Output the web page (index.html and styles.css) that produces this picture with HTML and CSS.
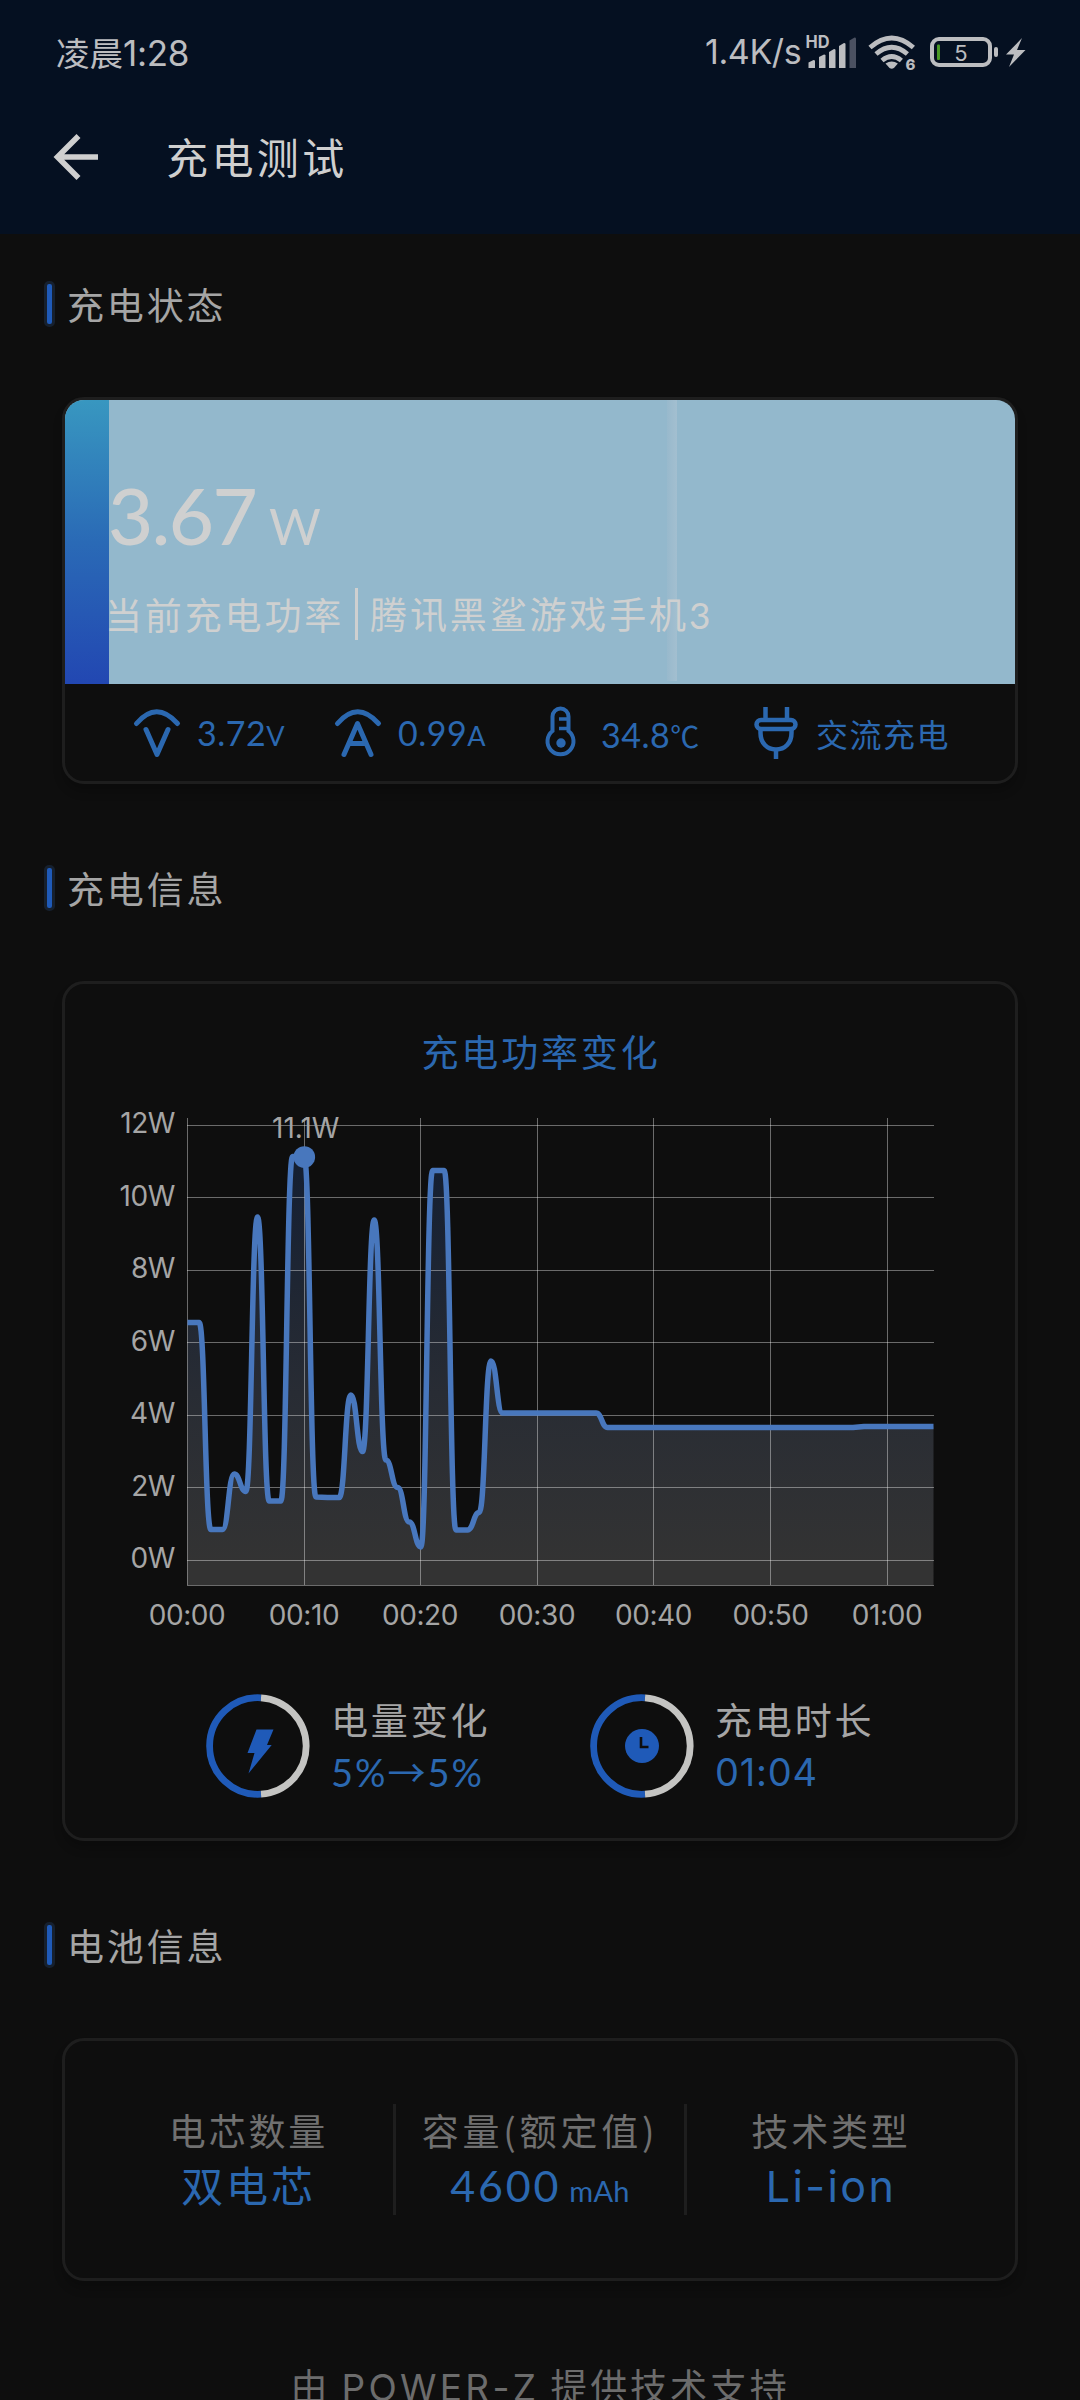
FILE: index.html
```html
<!DOCTYPE html>
<html lang="zh-CN">
<head>
<meta charset="utf-8">
<title>充电测试</title>
<link rel="stylesheet" href="styles.css">
</head>
<body>
<header class="header">
  <div class="statusbar">
    <div class="clock">凌晨<span class="clock-num">1:28</span></div>
    <div class="net">1.4K/s</div>
    <svg class="status-icons" width="222" height="40" viewBox="806 32 222 40">
      <g fill="#bcbdc0">
        <text x="805.5" y="48.3" font-size="17" font-weight="700" textLength="24" lengthAdjust="spacingAndGlyphs">HD</text>
        <path d="M808.500 62.500l5-2.500q1.500 0 1.500 1v7h-6.500z"/>
        <path d="M819 57l5-2.500q1.500 0 1.500 1v12.500h-6.500z"/>
        <path d="M829 52l5-3q1.500 0 1.500 1v18h-6.500z"/>
        <path d="M839 46l5-3q1.500 0 1.500 1v24h-6.500z"/>
        <path d="M849.500 40.500l5-3q1.500 0 1.500 1v29.500h-6.500z" fill="#4b5161"/>
        <path d="M885.500 63.500q6.200-4 12.400 0l-4 4.500q-2.200 1.600-4.400 0z"/>
        <text x="905.500" y="70" font-size="15" font-weight="800">6</text>
        <rect x="994" y="47" width="4" height="10" rx="2"/>
        <path d="M1022 38l-16 16.500h8l-5 12.500 16.500-17h-8.500z"/>
      </g>
      <g fill="none" stroke="#bcbdc0">
        <path stroke-width="4.800" d="M870 47.500q21.700-19 43.400 0M876 54q15.700-13.500 31.400 0M882 60.500q9.700-8 19.400 0"/>
        <rect x="932" y="39" width="58" height="26" rx="7" stroke-width="4"/>
      </g>
      <rect x="937" y="44.500" width="3" height="15.500" rx="1" fill="#4a9a26"/>
      <text x="961" y="60.500" font-size="22" fill="#bcbdc0" text-anchor="middle">5</text>
    </svg>
  </div>
  <div class="appbar">
    <svg class="back" width="46" height="46" viewBox="0 0 46 46"><path d="M24.500 2L3.500 23l21 21M4 23h40" fill="none" stroke="#cfcfcf" stroke-width="5.600"/></svg>
    <h1>充电测试</h1>
  </div>
</header>

<main>
  <h2>充电状态</h2>
  <section class="card status-card">
    <div class="hero">
      <div class="power"><span class="power-num">3.67</span><span class="power-unit">W</span></div>
      <div class="device"><span>当前充电功率</span><i class="sep"></i><span>腾讯黑鲨游戏手机<span class="lat">3</span></span></div>
    </div>
    <div class="metrics">
      <div class="metric volt">
        <svg width="46" height="52" viewBox="0 0 46 52"><path d="M2.500 16.500q20-23.500 41 0M12 22.500l11 25 11-25" fill="none" stroke="#2b68b0" stroke-width="5" stroke-linecap="round" stroke-linejoin="round"/></svg>
        <span>3.72<small>V</small></span>
      </div>
      <div class="metric amp">
        <svg width="46" height="52" viewBox="0 0 46 52"><path d="M2.500 16.500q20-23.500 41 0M9 47.500l13.500-31 13.500 31M14.500 36.500h16" fill="none" stroke="#2b68b0" stroke-width="5" stroke-linecap="round" stroke-linejoin="round"/></svg>
        <span>0.99<small>A</small></span>
      </div>
      <div class="metric temp">
        <svg width="32" height="54" viewBox="0 0 32 54"><path d="M7.500 25V10.500a8 8 0 0 1 16 0V25a13 13 0 1 1-16 0z" fill="none" stroke="#2b68b0" stroke-width="4"/><path d="M14 13h10M14 22.500h10" stroke="#2b68b0" stroke-width="3.500"/><circle cx="16" cy="37" r="4.700" fill="#2b68b0"/></svg>
        <span>34.8<small class="cjk">℃</small></span>
      </div>
      <div class="metric plug">
        <svg width="44" height="54" viewBox="0 0 44 54"><g fill="none" stroke="#2b68b0" stroke-width="4.500"><path d="M11.500 1v12M33 1v12M22 43v10M6.500 23v4c0 10 6.500 16.500 15.500 16.500S37.500 37 37.500 27v-4"/><rect x="2.500" y="14" width="39" height="9" rx="4.500"/></g></svg>
        <span class="cn">交流充电</span>
      </div>
    </div>
  </section>

  <h2>充电信息</h2>
  <section class="card chart-card">
    <h3>充电功率变化</h3>
    <svg class="chart" width="950" height="550" viewBox="65 1090 950 550">
      <defs>
        <linearGradient id="area" gradientUnits="userSpaceOnUse" x1="0" y1="1157" x2="0" y2="1585">
          <stop offset="0" stop-color="#141f32"/><stop offset=".55" stop-color="#282c34"/><stop offset=".95" stop-color="#333"/><stop offset="1" stop-color="#333"/>
        </linearGradient>
      </defs>
      <path fill="url(#area)" d="M187.500 1322.500h11.670c5.830 0 5.830 207 11.670 207h11.670c5.830 0 5.830-55.500 11.670-55.500s5.830 17.500 11.670 17.500 5.830-274.500 11.670-274.500 5.830 284 11.670 284h11.670c5.830 0 5.830-344.500 11.670-344.500h11.670c5.830 0 5.830 340.500 11.670 340.500l11.670.5h11.670c5.830 0 5.830-102.500 11.670-102.500s5.830 56.500 11.670 56.500 5.830-231.500 11.670-231.500 5.830 240 11.670 240 5.830 27.500 11.670 27.500 5.830 34.500 11.670 34.500 5.830 25 11.670 25 5.830-376.500 11.670-376.500h11.670c5.830 0 5.830 359.500 11.670 359.500h11.670c5.830 0 5.830-17.500 11.670-17.500s5.830-151.500 11.670-151.500 5.830 52 11.670 52H596c5.800 0 5.800 14.500 11.600 14.500H853l11-1h69.500V1585h-746z"/>
      <g stroke="#fff" stroke-opacity=".39" stroke-width="1">
        <path d="M187 1125.500h747M187 1197.500h747M187 1270.500h747M187 1342.500h747M187 1415.500h747M187 1487.500h747M187 1560.500h747M187 1585.500h747"/>
        <path d="M187.500 1118v467M304.500 1118v467M420.500 1118v467M537.500 1118v467M653.500 1118v467M770.500 1118v467M887.500 1118v467"/>
      </g>
      <path fill="none" stroke="#4877bd" stroke-width="5.500" stroke-linejoin="round" d="M187.500 1322.500h11.670c5.830 0 5.830 207 11.670 207h11.670c5.830 0 5.830-55.500 11.670-55.500s5.830 17.500 11.670 17.500 5.830-274.500 11.670-274.500 5.830 284 11.670 284h11.670c5.830 0 5.830-344.500 11.670-344.500h11.670c5.830 0 5.830 340.500 11.670 340.500l11.670.5h11.670c5.830 0 5.830-102.500 11.670-102.500s5.830 56.500 11.670 56.500 5.830-231.500 11.670-231.500 5.830 240 11.670 240 5.830 27.500 11.670 27.500 5.830 34.500 11.670 34.500 5.830 25 11.670 25 5.830-376.500 11.670-376.500h11.670c5.830 0 5.830 359.500 11.670 359.500h11.670c5.830 0 5.830-17.500 11.670-17.500s5.830-151.500 11.670-151.500 5.830 52 11.670 52H596c5.800 0 5.800 14.500 11.600 14.500H853l11-1h69.500"/>
      <circle cx="304.300" cy="1157" r="10.800" fill="#4877bd"/>
      <g class="axis" text-anchor="end">
        <text x="175" y="1133">12W</text><text x="175" y="1206">10W</text><text x="175" y="1278">8W</text><text x="175" y="1351">6W</text><text x="175" y="1423">4W</text><text x="175" y="1496">2W</text><text x="175" y="1568">0W</text>
      </g>
      <g class="axis" text-anchor="middle">
        <text x="305.500" y="1138" textLength="67">11.1W</text>
        <text x="187" y="1625">00:00</text><text x="304" y="1625">00:10</text><text x="420" y="1625">00:20</text><text x="537" y="1625">00:30</text><text x="653.500" y="1625">00:40</text><text x="770.500" y="1625">00:50</text><text x="887" y="1625">01:00</text>
      </g>
    </svg>
    <div class="stats">
      <div class="stat">
        <svg width="104" height="104" viewBox="0 0 104 104"><g fill="none" stroke-width="6.800"><path stroke="#1f5ab8" d="M55 3.800A48.300 48.300 0 1 0 55 100.200"/><path stroke="#c4c4c2" d="M55 3.800A48.300 48.300 0 0 1 55 100.200"/></g><path fill="#1f5ab8" d="M50.500 35.500h17l-6.500 15.500h4.700L42.500 79.500l6-20.500h-7z"/></svg>
        <div class="stat-text"><span>电量变化</span><b>5%<i class="arrow">→</i>5%</b></div>
      </div>
      <div class="stat">
        <svg width="104" height="104" viewBox="0 0 104 104"><g fill="none" stroke-width="6.800"><path stroke="#1f5ab8" d="M55 3.800A48.300 48.300 0 1 0 55 100.200"/><path stroke="#c4c4c2" d="M55 3.800A48.300 48.300 0 0 1 55 100.200"/></g><circle cx="52" cy="52" r="17" fill="#1f5ab8"/><path d="M51 43v10h7.500" fill="none" stroke="#0e0e0e" stroke-width="2.600"/></svg>
        <div class="stat-text"><span>充电时长</span><b class="duration">01:04</b></div>
      </div>
    </div>
  </section>

  <h2>电池信息</h2>
  <section class="card battery-card">
    <div class="cell"><span>电芯数量</span><b>双电芯</b></div>
    <div class="cell rated"><span>容量(额定值)</span><b class="lat">4600<small>mAh</small></b></div>
    <div class="cell"><span>技术类型</span><b class="tech">Li-ion</b></div>
  </section>
  <footer>由 <span class="brand">POWER-Z</span> 提供技术支持</footer>
</main>
</body>
</html>
```
FILE: styles.css
```css
*, *::before { box-sizing: border-box; margin: 0; padding: 0; }
html, body { width: 1080px; height: 2400px; overflow: hidden; }
body {
  background: #0e0e0e;
  color: #a5a5a5;
  font-family: "Noto Sans CJK SC", sans-serif;
  font-size: 37px;
  letter-spacing: 2.85px;
  white-space: nowrap;
}
svg { display: block; flex: none; overflow: visible; font-family: Inter, sans-serif; letter-spacing: 0; }
i, b { font-style: normal; font-weight: 400; }
.lat { font-family: Lato, "Noto Sans CJK SC", sans-serif; }

.header { height: 234px; background: #051021; }
.statusbar { display: flex; align-items: center; height: 104px; padding: 0 52px 0 56px; color: #bcbdc0; letter-spacing: 0; }
.clock { flex: 1; font-size: 33.5px; line-height: 40px; }
.clock-num { font-family: Inter, sans-serif; font-size: 35px; letter-spacing: -.3px; }
.net { width: 101px; font-family: Inter, sans-serif; font-size: 34px; line-height: 40px; letter-spacing: -.4px; }
.appbar { display: flex; align-items: center; height: 106px; padding-left: 54px; gap: 66px; }
h1 { font-size: 42px; font-weight: 400; line-height: 60px; letter-spacing: 3.4px; color: #cfcfcf; margin-top: -3px; }

h2 {
  display: flex;
  align-items: center;
  height: 46px;
  margin: 81px 0 70px 44px;
  font-size: 37px;
  font-weight: 400;
  line-height: 46px;
}
h2::before {
  content: "";
  width: 11px;
  height: 46px;
  margin-right: 12px;
  border: 3px solid #16202e;
  border-radius: 5px;
  background: #1f5ab8;
}
main > h2:first-child { margin-top: 47px; }

.card {
  width: 956px;
  margin-left: 62px;
  border: 3px solid #1e1e1e;
  border-radius: 22px;
  overflow: hidden;
  box-shadow: 0 8px 10px rgba(0, 0, 0, .2);
}

.status-card { height: 387px; }
.hero {
  height: 284px;
  padding: 75px 0 0 44px;
  color: #cfd0d0;
  background:
    linear-gradient(90deg, #98b9cc, #a3bfd0) 602px 0 / 10px 281px no-repeat,
    linear-gradient(#3897c0, #2a6ab6 50%, #2247b2) 0 0 / 44px 100% no-repeat,
    #93b8cc;
}
.power { display: flex; align-items: baseline; height: 80px; line-height: 80px; font-family: Lato, sans-serif; }
.power-num { width: 161px; margin-left: -1px; font-size: 78px; font-weight: 500; letter-spacing: -1.5px; }
.power-unit { font-size: 50px; font-weight: 400; }
.device { display: flex; align-items: center; height: 52px; margin-top: 33px; margin-left: -4px; line-height: 52px; }
.sep { width: 3px; height: 52px; margin: 0 12px 0 11px; background: #cfd0d0; }
.metrics { display: flex; align-items: center; height: 97px; padding-left: 69px; color: #2b68b0; }
.metric { display: flex; align-items: center; height: 60px; font-family: Lato, sans-serif; font-size: 34px; line-height: 60px; letter-spacing: .5px; }
.metric span { padding-top: 4px; }
.metric small { font-size: 27px; }
.metric .cjk { font-family: "Noto Sans CJK SC", sans-serif; font-size: 29px; }
.metric .cn { padding-top: 0; font-family: "Noto Sans CJK SC", sans-serif; font-size: 32px; letter-spacing: 1.5px; }
.volt, .amp { width: 201px; gap: 17px; }
.temp { width: 209px; gap: 24px; margin-left: 9px; }
.plug { gap: 18px; }

.chart-card { height: 860px; padding-top: 40px; }
h3 { height: 54px; padding-left: 2px; font-size: 37px; font-weight: 400; line-height: 54px; text-align: center; color: #2b68b0; }
.chart { margin-top: 12px; }
.axis { font-size: 28px; fill: #a5a5a5; letter-spacing: -.4px; }
.stats { display: flex; padding: 54px 0 0 141px; }
.stat { display: flex; width: 384px; gap: 21px; }
.stat-text { display: flex; flex-direction: column; }
.stat-text span { line-height: 50px; }
.stat-text b { font-family: Lato, sans-serif; font-size: 38px; line-height: 54px; letter-spacing: 2px; color: #2b68b0; }
.stat-text .arrow { font-family: "Noto Sans CJK SC", sans-serif; }
.stat-text .duration { font-family: Inter, sans-serif; letter-spacing: .8px; padding-top: 1px; }

.battery-card { display: grid; grid-template-columns: 291px 291px 291px; height: 243px; padding: 63px 0 0 37px; }
.cell { height: 111px; padding-left: 2px; text-align: center; }
.cell + .cell { padding-left: 0; border-left: 3px solid #1e1e1e; }
.cell span { display: block; height: 52px; line-height: 52px; color: #707070; }
.cell b { display: block; height: 56px; font-size: 42px; line-height: 56px; color: #2b68b0; }
.rated span { letter-spacing: 3.8px; }
.cell .lat { font-size: 43px; line-height: 59px; }
.cell .tech { font-family: Inter, sans-serif; font-size: 43px; line-height: 60px; letter-spacing: 2.4px; }
.cell small { margin-left: 8px; font-size: 29px; letter-spacing: .3px; }
.brand { font-family: Inter, sans-serif; letter-spacing: 3.3px; }
footer { margin-top: 76px; line-height: 56px; text-align: center; color: #6c6c6c; }
```
